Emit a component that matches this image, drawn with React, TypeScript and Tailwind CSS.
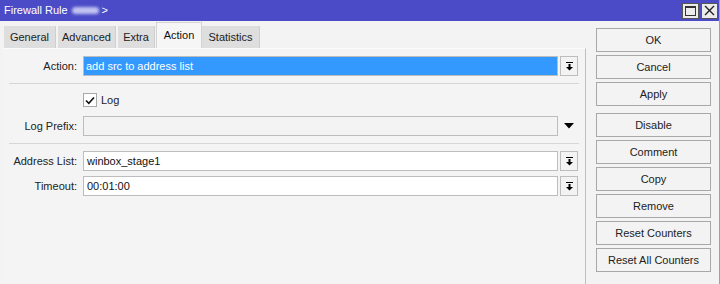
import React from "react";

const DropIcon = () => (
  <svg width="9" height="9" viewBox="0 0 9 9" className="block">
    <rect x="1" y="0" width="7" height="1" fill="#000" />
    <rect x="3.5" y="2" width="2" height="3" fill="#000" />
    <polygon points="1,5 8,5 4.5,8.5" fill="#000" />
  </svg>
);

const DropBtn = () => (
  <div className="ml-[2px] w-[18px] h-[20px] border border-[#bdbdbd] bg-[#f3f3f3] flex items-center justify-center">
    <DropIcon />
  </div>
);

const Label = ({ children }: { children: React.ReactNode }) => (
  <div className="w-[80px] pr-[6px] text-right text-[#222]">{children}</div>
);

const Btn = ({ children, extra = "" }: { children: React.ReactNode; extra?: string }) => (
  <div
    className={
      "w-[115px] h-[24px] border border-[#a8a8a8] bg-[#f3f3f3] flex items-center justify-center text-[#222] " +
      extra
    }
  >
    {children}
  </div>
);

export default function App() {
  return (
    <div
      className="w-[720px] h-[284px] bg-[#f3f3f3] flex flex-col overflow-hidden text-[11px] border-r border-[#a0a0a0]"
      style={{ fontFamily: '"Liberation Sans", Arial, sans-serif' }}
    >
      {/* Title bar */}
      <div className="h-[21px] bg-[#4b4bc8] flex items-center pl-[4px] text-white shrink-0">
        <span>Firewall Rule</span>
        <span className="ml-[4px] w-[27px] h-[7px] rounded-full bg-[#c2c2f2] blur-[1.5px]" />
        <span className="ml-[3px]">&gt;</span>
        <div className="ml-auto flex gap-[2px] pr-[1px]">
          <div className="w-[17px] h-[16px] bg-[#ececec] border border-[#555] flex items-center justify-center">
            <div className="w-[11px] h-[10px] border border-[#333] border-t-[2px]" />
          </div>
          <div className="w-[17px] h-[16px] bg-[#ececec] border border-[#555] flex items-center justify-center">
            <svg width="11" height="11" viewBox="0 0 11 11">
              <path d="M1 1 L10 10 M10 1 L1 10" stroke="#222" strokeWidth="1.4" />
            </svg>
          </div>
        </div>
      </div>

      <div className="flex flex-1">
        {/* Left */}
        <div className="w-[586px] flex flex-col">
          {/* Tabs */}
          <div className="h-[27px] flex items-end pl-[4px] shrink-0">
            <div className="w-[52px] h-[22px] bg-[#dedede] border-r border-[#cfcfcf] flex items-center justify-center text-[#222]">
              General
            </div>
            <div className="ml-[2px] w-[58px] h-[22px] bg-[#dedede] border-r border-[#cfcfcf] flex items-center justify-center text-[#222]">
              Advanced
            </div>
            <div className="ml-[2px] w-[37px] h-[22px] bg-[#dedede] border-r border-[#cfcfcf] flex items-center justify-center text-[#222]">
              Extra
            </div>
            <div className="ml-[1px] w-[46px] h-[26px] bg-[#f6f6f6] border-t border-l border-r border-[#d4d4d4] flex items-start pt-[4px] justify-center text-[#111]">
              Action
            </div>
            <div className="w-[58px] h-[22px] bg-[#dedede] border-r border-[#cfcfcf] flex items-center justify-center text-[#222]">
              Statistics
            </div>
          </div>

          {/* Panel */}
          <div className="flex-1 ml-[3px] border-t border-[#fbfbfb] border-r border-r-[#bfbfbf] bg-[#f4f4f4] pt-[7px]">
            <div className="flex items-center h-[20px]">
              <Label>Action:</Label>
              <div className="w-[475px] h-[20px] border border-[#bdbdbd] bg-[#3399ff] text-white flex items-center pl-[2px]">
                add src to address list
              </div>
              <DropBtn />
            </div>

            <div className="mt-[7px] ml-[6px] mr-[6px] h-px bg-[#d6d6d6]" />

            <div className="mt-[9px] flex items-center h-[14px] pl-[80px]">
              <div className="w-[14px] h-[14px] border border-[#a8a8a8] bg-white flex items-center justify-center">
                <svg width="10" height="9" viewBox="0 0 10 9">
                  <path d="M1 4.5 L3.8 7.3 L9 1.5" stroke="#111" strokeWidth="1.6" fill="none" />
                </svg>
              </div>
              <span className="ml-[4px] text-[#222]">Log</span>
            </div>

            <div className="mt-[9px] flex items-center h-[20px]">
              <Label>Log Prefix:</Label>
              <div className="w-[475px] h-[20px] border border-[#bdbdbd] bg-[#f3f3f3]" />
              <div className="ml-[2px] w-[18px] flex items-center justify-center">
                <svg width="10" height="6" viewBox="0 0 10 6">
                  <polygon points="0,0 10,0 5,5.5" fill="#000" />
                </svg>
              </div>
            </div>

            <div className="mt-[7px] ml-[6px] mr-[6px] h-px bg-[#d6d6d6]" />

            <div className="mt-[7px] flex items-center h-[20px]">
              <Label>Address List:</Label>
              <div className="w-[475px] h-[20px] border border-[#bdbdbd] bg-white text-[#111] flex items-center pl-[3px]">
                winbox_stage1
              </div>
              <DropBtn />
            </div>

            <div className="mt-[5px] flex items-center h-[20px]">
              <Label>Timeout:</Label>
              <div className="w-[475px] h-[20px] border border-[#bdbdbd] bg-white text-[#111] flex items-center pl-[3px]">
                00:01:00
              </div>
              <DropBtn />
            </div>
          </div>
        </div>

        {/* Right buttons */}
        <div className="flex-1 pl-[10px] pt-[7px] flex flex-col gap-[3px]">
          <Btn>OK</Btn>
          <Btn>Cancel</Btn>
          <Btn>Apply</Btn>
          <Btn extra="mt-[4px]">Disable</Btn>
          <Btn>Comment</Btn>
          <Btn>Copy</Btn>
          <Btn>Remove</Btn>
          <Btn>Reset Counters</Btn>
          <Btn>Reset All Counters</Btn>
        </div>
      </div>
    </div>
  );
}
